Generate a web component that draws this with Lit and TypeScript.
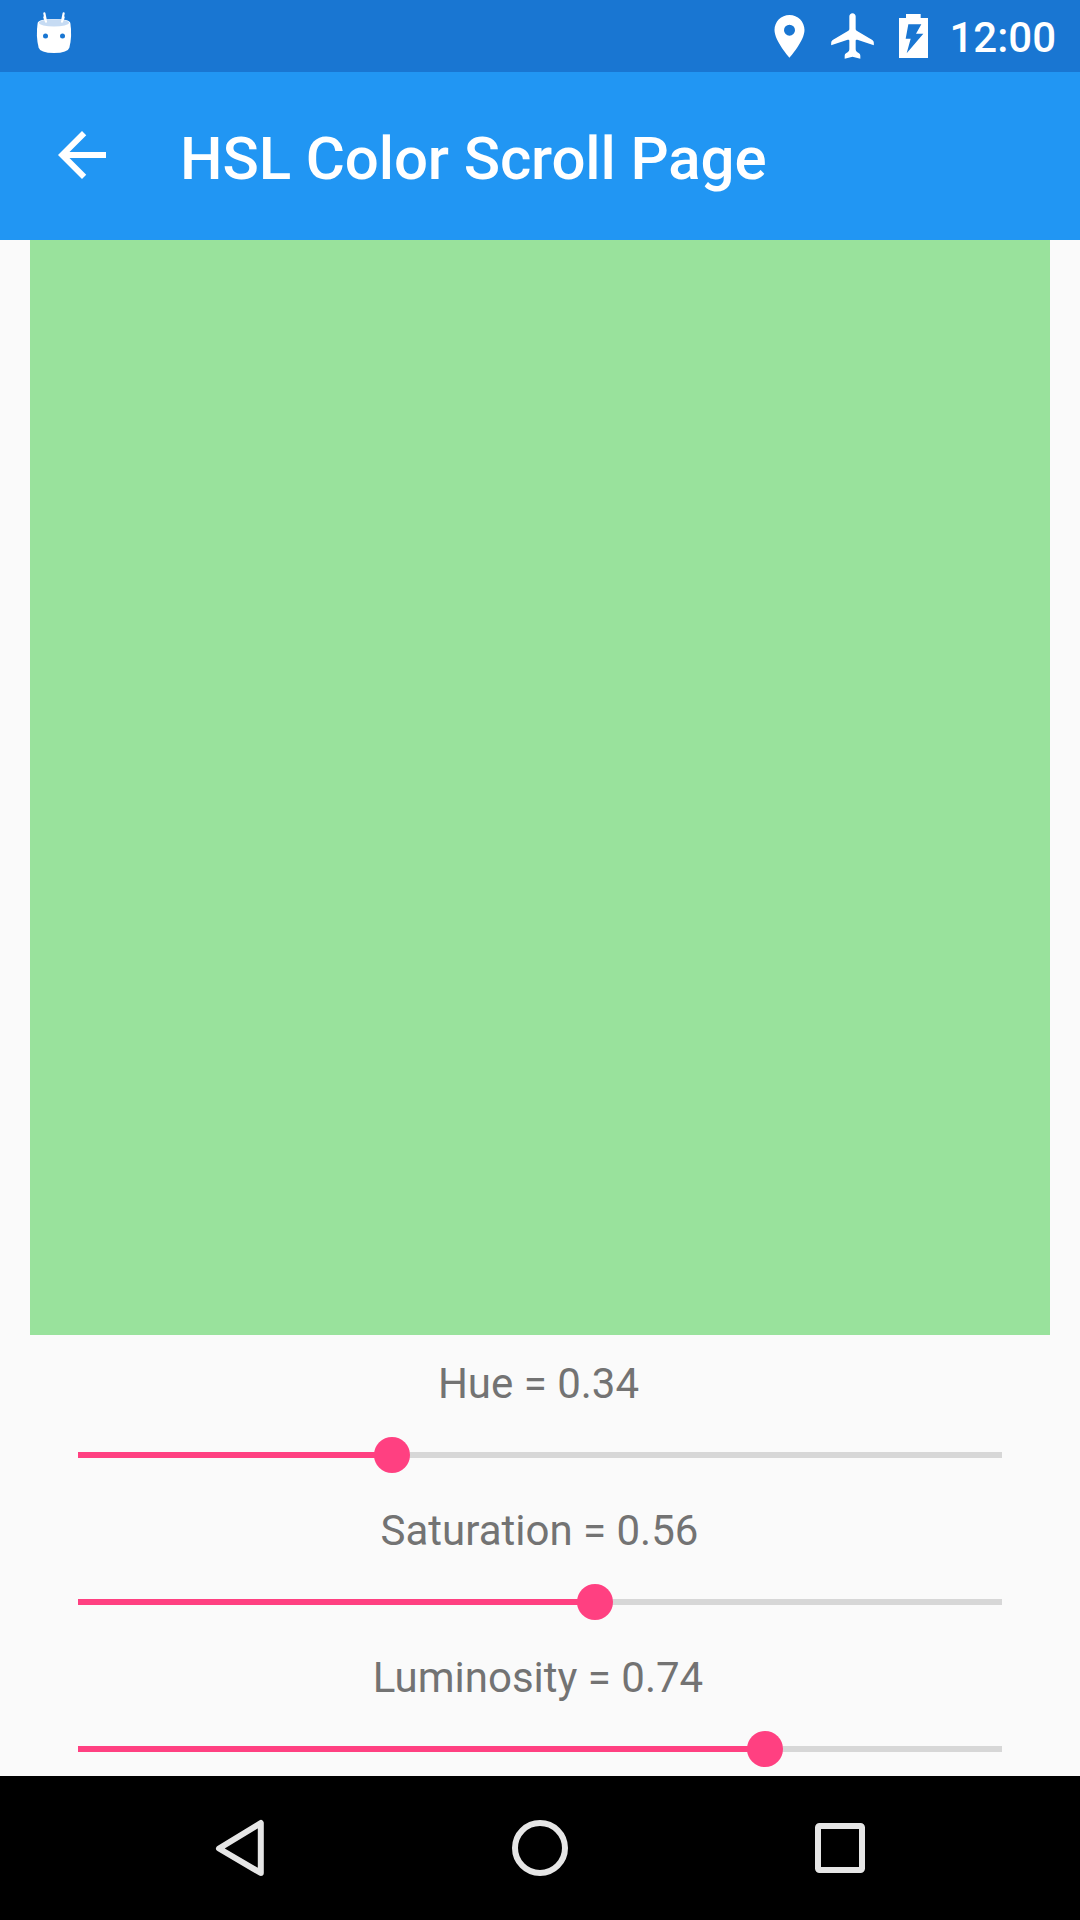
import { LitElement, html, css } from "lit";
import { customElement, property, state } from "lit/decorators.js";

@customElement("status-bar")
class StatusBar extends LitElement {
  static styles = css`
    :host {
      display: flex;
      height: 72px;
      background: #1976d2;
      color: #fff;
      justify-content: space-between;
    }
    svg {
      display: block;
      height: 72px;
    }
    .left {
      padding-left: 30px;
    }
    .right {
      display: flex;
      padding-right: 24px;
    }
    .clock {
      font: 500 42px/49px Roboto, sans-serif;
      padding-top: 13px;
      margin-left: 21px;
    }
  `;

  render() {
    return html`
      <div class="left">
        <svg width="48" viewBox="0 0 144 216">
          <path d="M43 40L48 64M101 40L96 64" stroke="#fff" stroke-width="6.5" stroke-linecap="round" />
          <path d="M23 69Q26 57 72 57Q118 57 121 69Q127 108 118 143Q114 158 72 159Q30 158 26 143Q17 108 23 69Z" fill="#fff" />
          <ellipse cx="72" cy="68.5" rx="45" ry="11" fill="#c6dbf3" />
          <path d="M43 52L48 65M101 52L96 65" stroke="#fff" stroke-width="6.5" stroke-linecap="round" />
          <circle cx="46.5" cy="108" r="7.5" fill="#1976d2" />
          <circle cx="97.5" cy="108" r="7.5" fill="#1976d2" />
        </svg>
      </div>
      <div class="right">
        <svg width="60" viewBox="0 0 180 216">
          <path
            fill="#fff"
            fill-rule="evenodd"
            d="M88.500 45C63.500 45 43.500 65 43.500 90C43.500 123 88.500 173 88.500 173S133.500 123 133.500 90C133.500 65 113.500 45 88.500 45ZM88.500 74A16.500 16.500 0 1 1 88.500 107A16.500 16.500 0 1 1 88.500 74Z"
          />
        </svg>
        <svg width="60" viewBox="180 0 180 216">
          <path
            fill="#fff"
            d="M277.500 39.500C272 39.500 268 43.500 268 49V87Q268 90 265 92L218 120Q213.500 123 213.500 128V135.500L263 119.500Q268 118 268 122V148Q268 153 264 156L258 159.500Q254 162 254 167V176L277.500 170.500L301 176V167Q301 162 297 159.500L291 156Q287 153 287 148V122Q287 118 292 119.500L341.500 135.500V128Q341.500 123 337 120L290 92Q287 90 287 87V49C287 43.500 283 39.500 277.500 39.500Z"
          />
        </svg>
        <svg width="48" viewBox="360 0 144 216">
          <path fill="#fff" d="M438 42H482V54H504V174H417V54H438Z" />
          <path fill="#1976d2" d="M445 73H484L468 101H490L440 160L452 116H437Z" />
        </svg>
        <div class="clock">12:00</div>
      </div>
    `;
  }
}

@customElement("app-bar")
class AppBar extends LitElement {
  static styles = css`
    :host {
      display: flex;
      height: 168px;
      background: #2196f3;
      color: #fff;
      padding-left: 46px;
    }
    .back {
      width: 72px;
      height: 72px;
      margin-top: 47px;
    }
    .title {
      margin: 0 0 0 62px;
      padding-top: 52px;
      font: 500 60px/70px Roboto, sans-serif;
      letter-spacing: -0.12px;
      white-space: nowrap;
    }
  `;
  @property() heading = "";

  render() {
    return html`
      <svg class="back" viewBox="0 0 24 24" fill="#fff">
        <path d="M20 11H7.830l5.590-5.590L12 4l-8 8 8 8 1.410-1.410L7.830 13H20v-2z" />
      </svg>
      <h1 class="title">${this.heading}</h1>
    `;
  }
}

@customElement("color-slider")
class ColorSlider extends LitElement {
  static styles = css`
    :host {
      display: flex;
      flex-direction: column;
      height: 147px;
    }
    .label {
      box-sizing: border-box;
      height: 93px;
      padding-top: 24px;
      text-align: center;
      font: 400 42px/49px Roboto, sans-serif;
      color: #737373;
    }
    .slider {
      height: 54px;
      margin: 0 78px;
      display: flex;
      align-items: center;
    }
    .done {
      height: 6px;
      background: #ff4081;
    }
    .thumb {
      width: 36px;
      height: 36px;
      border-radius: 50%;
      background: #ff4081;
      margin: 0 -18px;
      flex: none;
      z-index: 1;
    }
    .rest {
      flex: 1;
      height: 6px;
      background: #d7d7d7;
    }
  `;
  @property() name = "";
  @property({ type: Number }) value = 0;
  @property({ type: Number }) inset = 0;

  render() {
    return html`
      <div class="label" style="padding-right:${this.inset}px">${this.name} = ${this.value.toFixed(2)}</div>
      <div class="slider">
        <div class="done" style="width:${this.value * 100}%"></div>
        <div class="thumb"></div>
        <div class="rest"></div>
      </div>
    `;
  }
}

@customElement("navigation-bar")
class NavigationBar extends LitElement {
  static styles = css`
    :host {
      display: flex;
      justify-content: center;
      height: 144px;
      background: #000;
    }
    svg {
      width: 300px;
      height: 144px;
      fill: none;
      stroke: #e6e6e6;
      stroke-width: 6;
      stroke-linejoin: round;
    }
  `;

  render() {
    return html`
      <svg viewBox="0 0 300 144"><path d="M170.800 47V97L129 72.500Z" /></svg>
      <svg viewBox="0 0 300 144"><circle cx="150" cy="72" r="25" /></svg>
      <svg viewBox="0 0 300 144"><rect x="128" y="50" width="44" height="44" rx="1.500" /></svg>
    `;
  }
}

@customElement("app-root")
class AppRoot extends LitElement {
  static styles = css`
    :host {
      display: flex;
      flex-direction: column;
      width: 1080px;
      height: 1920px;
      overflow: hidden;
      background: #fafafa;
    }
    .swatch {
      flex: 1;
      margin: 0 30px;
      background: #99e29c;
    }
  `;
  @state() private channels = [
    { name: "Hue", value: 0.34, inset: 3 },
    { name: "Saturation", value: 0.56, inset: 1 },
    { name: "Luminosity", value: 0.7435, inset: 4 },
  ];

  render() {
    return html`
      <status-bar></status-bar>
      <app-bar heading="HSL Color Scroll Page"></app-bar>
      <div class="swatch"></div>
      ${this.channels.map(
        (c) => html`<color-slider .name=${c.name} .value=${c.value} .inset=${c.inset}></color-slider>`
      )}
      <navigation-bar></navigation-bar>
    `;
  }
}
